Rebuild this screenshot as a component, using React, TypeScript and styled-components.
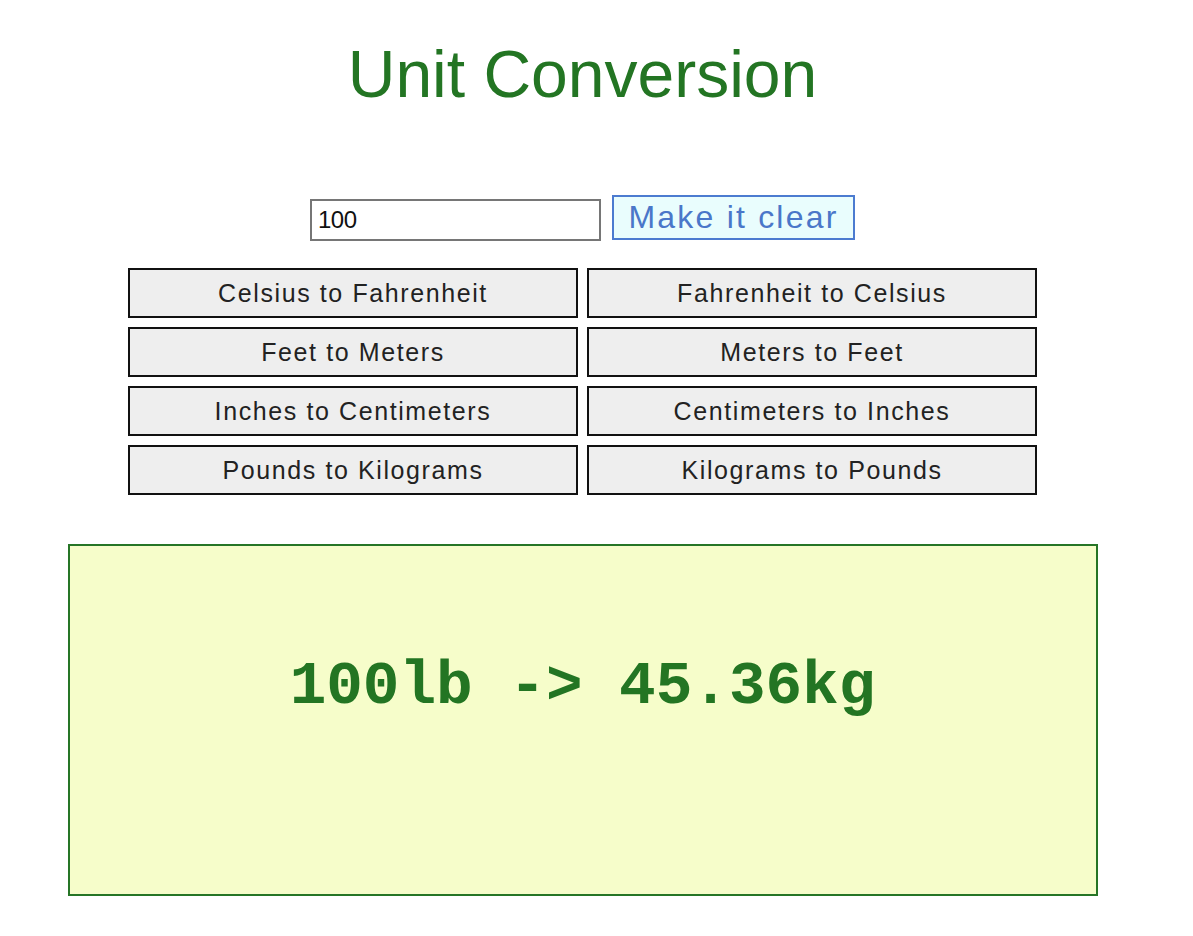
import React, { useState } from "react";
import styled, { createGlobalStyle } from "styled-components";

const GlobalStyle = createGlobalStyle`
  html, body {
    margin: 0;
    padding: 0;
    background: #ffffff;
  }
  body {
    margin: 8px;
    font-family: "Liberation Sans", Arial, sans-serif;
  }
`;

const Page = styled.main`
  width: 1149px;
  display: flex;
  flex-direction: column;
  align-items: center;
`;

const Title = styled.h1`
  margin: 28px 0 0;
  font-family: "Liberation Sans", Arial, sans-serif;
  font-weight: 400;
  font-size: 66px;
  line-height: 76px;
  color: #237523;
`;

const InputRow = styled.div`
  margin-top: 83px;
  display: flex;
  align-items: flex-end;
  gap: 11px;
`;

const ValueInput = styled.input`
  box-sizing: border-box;
  width: 291px;
  height: 42px;
  margin-bottom: -1px;
  border: 2px solid #767676;
  padding: 0 6px;
  font-family: "Liberation Sans", Arial, sans-serif;
  font-size: 24px;
  letter-spacing: -0.5px;
  color: #111;
  background: #fff;
  outline: none;
`;

const ClearButton = styled.button`
  box-sizing: border-box;
  width: 243px;
  height: 45px;
  border: 2px solid #4c7bd0;
  background: #e9fdfd;
  color: #4a77c9;
  font-family: "Liberation Sans", Arial, sans-serif;
  font-size: 32px;
  letter-spacing: 2.2px;
  padding: 0;
  cursor: pointer;
`;

const Grid = styled.div`
  margin-top: 28px;
  display: grid;
  grid-template-columns: 450px 450px;
  grid-auto-rows: 50px;
  column-gap: 9px;
  row-gap: 9px;
`;

const ConvertButton = styled.button`
  box-sizing: border-box;
  border: 2px solid #111;
  background: #eeeeee;
  color: #222;
  font-family: "Liberation Sans", Arial, sans-serif;
  font-size: 25px;
  letter-spacing: 1.6px;
  padding: 0;
  cursor: pointer;
`;

const ResultBox = styled.section`
  box-sizing: border-box;
  margin-top: 49px;
  width: 1030px;
  height: 352px;
  border: 2px solid #267526;
  background: #f6fdca;
  display: flex;
  justify-content: center;
  padding-top: 106px;
`;

const ResultText = styled.div`
  font-family: "Liberation Mono", "Courier New", monospace;
  font-weight: 700;
  font-size: 61px;
  line-height: 70px;
  color: #237523;
`;

const conversions = [
  "Celsius to Fahrenheit",
  "Fahrenheit to Celsius",
  "Feet to Meters",
  "Meters to Feet",
  "Inches to Centimeters",
  "Centimeters to Inches",
  "Pounds to Kilograms",
  "Kilograms to Pounds",
];

export default function App() {
  const [value, setValue] = useState("100");
  return (
    <>
      <GlobalStyle />
      <Page>
        <Title>Unit Conversion</Title>
        <InputRow>
          <ValueInput value={value} onChange={(e) => setValue(e.target.value)} />
          <ClearButton onClick={() => setValue("")}>Make it clear</ClearButton>
        </InputRow>
        <Grid>
          {conversions.map((c) => (
            <ConvertButton key={c}>{c}</ConvertButton>
          ))}
        </Grid>
        <ResultBox>
          <ResultText>100lb -&gt; 45.36kg</ResultText>
        </ResultBox>
      </Page>
    </>
  );
}
